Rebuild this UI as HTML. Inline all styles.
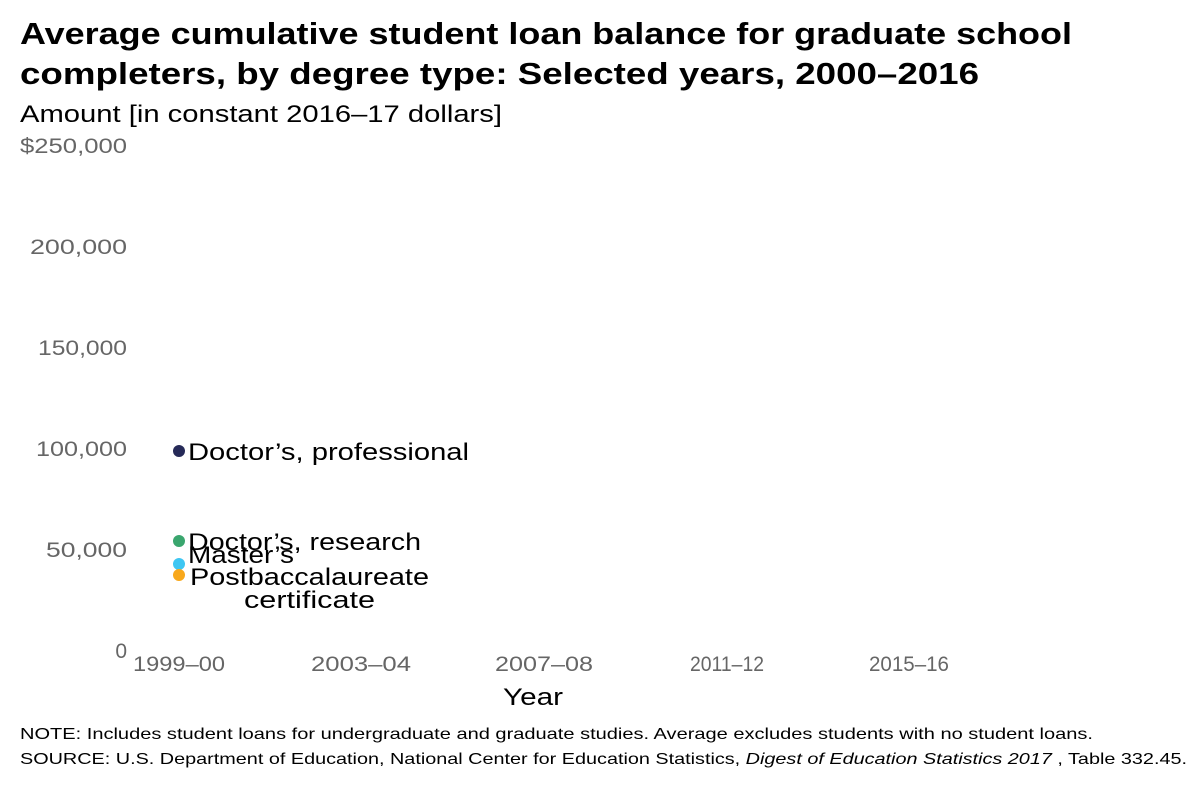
<!DOCTYPE html>
<html><head><meta charset="utf-8"><style>
html,body{margin:0;padding:0;background:#fff;width:1200px;height:800px;overflow:hidden;font-family:"Liberation Sans",sans-serif;}
svg text{font-family:"Liberation Sans",sans-serif;}
</style></head><body>
<svg width="1200" height="800" xmlns="http://www.w3.org/2000/svg">
<text x="20" y="44" font-size="31" font-weight="bold" fill="#000" textLength="1052" lengthAdjust="spacingAndGlyphs">Average cumulative student loan balance for graduate school</text>
<text x="20" y="84" font-size="31" font-weight="bold" fill="#000" textLength="959" lengthAdjust="spacingAndGlyphs">completers, by degree type: Selected years, 2000–2016</text>
<text x="20" y="122" font-size="24" fill="#000" textLength="482" lengthAdjust="spacingAndGlyphs">Amount [in constant 2016–17 dollars]</text>
<g font-size="21" fill="#666" text-anchor="end">
<text x="127" y="153" textLength="107" lengthAdjust="spacingAndGlyphs">$250,000</text>
<text x="127" y="254" textLength="97" lengthAdjust="spacingAndGlyphs">200,000</text>
<text x="127" y="355" textLength="89" lengthAdjust="spacingAndGlyphs">150,000</text>
<text x="127" y="456" textLength="91" lengthAdjust="spacingAndGlyphs">100,000</text>
<text x="127" y="557" textLength="81" lengthAdjust="spacingAndGlyphs">50,000</text>
<text x="127" y="658">0</text>
</g>
<g font-size="21" fill="#666" text-anchor="middle">
<text x="179" y="671" textLength="92" lengthAdjust="spacingAndGlyphs">1999–00</text>
<text x="361" y="671" textLength="100" lengthAdjust="spacingAndGlyphs">2003–04</text>
<text x="544" y="671" textLength="98" lengthAdjust="spacingAndGlyphs">2007–08</text>
<text x="727" y="671" textLength="74" lengthAdjust="spacingAndGlyphs">2011–12</text>
<text x="909" y="671" textLength="80" lengthAdjust="spacingAndGlyphs">2015–16</text>
</g>
<text x="533" y="705" font-size="24" fill="#000" text-anchor="middle" textLength="60" lengthAdjust="spacingAndGlyphs">Year</text>
<circle cx="179" cy="451" r="6" fill="#262a58"/>
<circle cx="179" cy="541" r="6" fill="#3aa66e"/>
<circle cx="179" cy="564" r="6" fill="#3ec6f2"/>
<circle cx="179" cy="575" r="6" fill="#f8a81c"/>
<g font-size="24" fill="#000">
<text x="188" y="460" textLength="281" lengthAdjust="spacingAndGlyphs">Doctor’s, professional</text>
<text x="188" y="550" textLength="233" lengthAdjust="spacingAndGlyphs">Doctor’s, research</text>
<text x="188" y="563" textLength="106" lengthAdjust="spacingAndGlyphs">Master’s</text>
<text x="190" y="585" textLength="239" lengthAdjust="spacingAndGlyphs">Postbaccalaureate</text>
<text x="244" y="608" textLength="131" lengthAdjust="spacingAndGlyphs">certificate</text>
</g>
<text x="20" y="739" font-size="16" fill="#000" textLength="1073" lengthAdjust="spacingAndGlyphs">NOTE: Includes student loans for undergraduate and graduate studies. Average excludes students with no student loans.</text>
<text x="20" y="764" font-size="16" fill="#000" textLength="1167" lengthAdjust="spacingAndGlyphs">SOURCE: U.S. Department of Education, National Center for Education Statistics,  <tspan font-style="italic">Digest of Education Statistics 2017</tspan> , Table 332.45.</text>
</svg>
</body></html>
